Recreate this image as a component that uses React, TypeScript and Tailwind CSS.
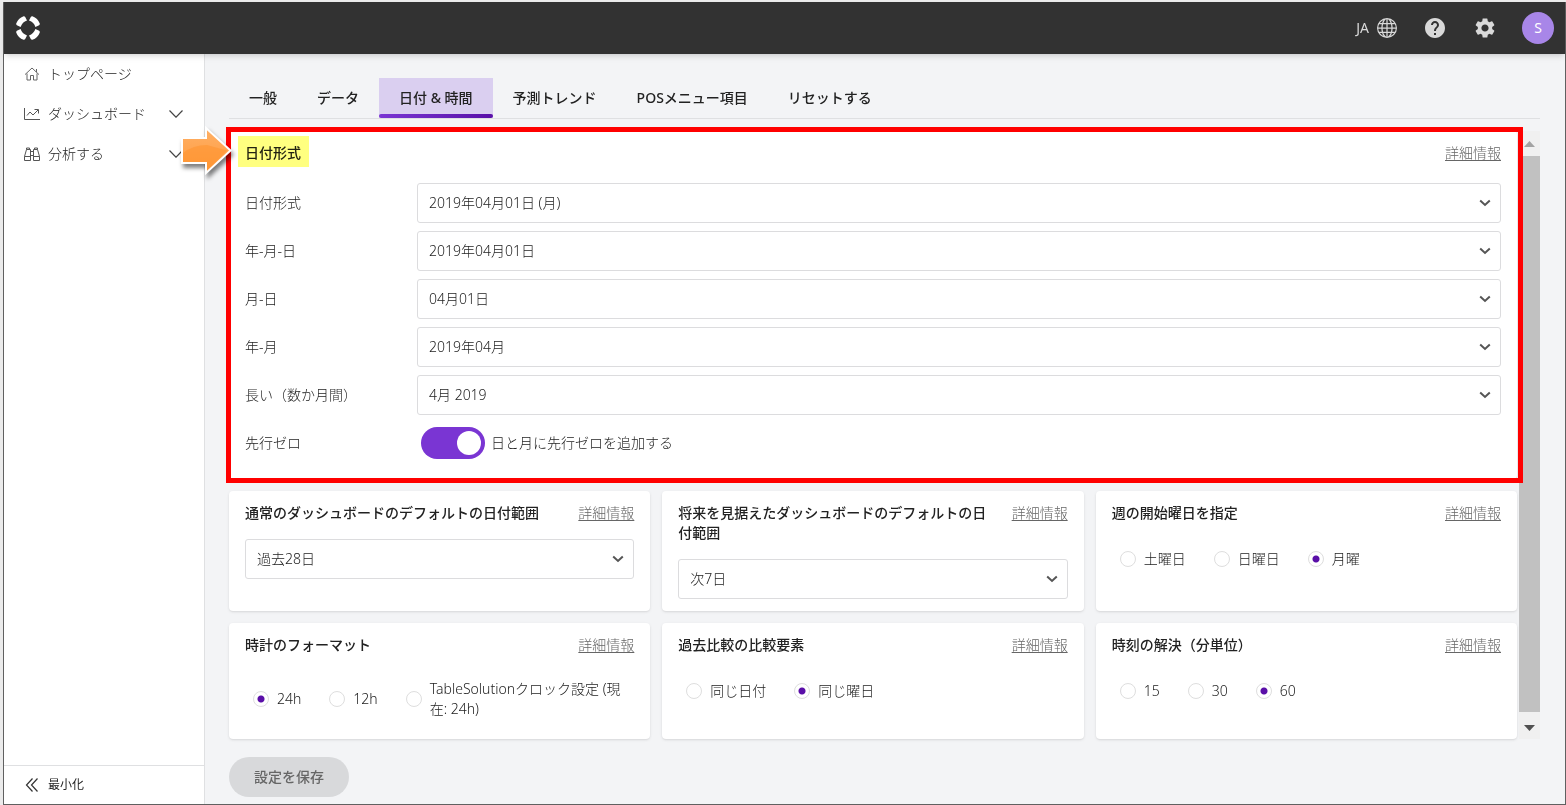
import { useState } from "react";
import { MdHelp, MdSettings } from "react-icons/md";
import { BsGlobe } from "react-icons/bs";

type SelectBoxProps = {
    id: string;
    label?: string;
    options: string[];
};

type CardProps = {
    title: string;
    children: React.ReactNode;
};

type RadioGroupProps = {
    name: string;
    options: string[];
    defaultOption: string;
};

const TABS = ["一般", "データ", "日付 & 時間", "予測トレンド", "POSメニュー項目", "リセットする"];

const FORMAT_ROWS = [
    { id: "date-format", label: "日付形式", options: ["2019年04月01日 (月)"] },
    { id: "year-month-day", label: "年-月-日", options: ["2019年04月01日"] },
    { id: "month-day", label: "月-日", options: ["04月01日"] },
    { id: "year-month", label: "年-月", options: ["2019年04月"] },
    { id: "long-months", label: "長い（数か月間）", options: ["4月 2019"] },
];

const Logo = () => (
    <svg viewBox="0 0 24 24" className="w-6 h-6" aria-hidden="true">
        <g fill="#fff">
            {[0, 90, 180, 270].map((angle) => (
                <path
                    key={angle}
                    transform={`rotate(${angle} 12 12)`}
                    d="M7.600 0.200 Q8.600 0 9.200 0.900 L11 4.600 Q6.400 6 4.600 11 L0.900 9.200 Q0 8.600 0.200 7.600 Q2.200 2.200 7.600 0.200Z"
                />
            ))}
        </g>
    </svg>
);

const HomeIcon = () => (
    <svg viewBox="0 0 16 16" className="w-4 h-4" fill="none" stroke="#666" aria-hidden="true">
        <path d="M1 8.600 8 2l7 6.600M3 7.500v6.500h3.500V9.500h3V14H13V7.500M12.500 6V3" />
    </svg>
);

const ChartIcon = () => (
    <svg viewBox="0 0 16 16" className="w-4 h-4" fill="none" stroke="#555" aria-hidden="true">
        <path d="M.5 2v11.500H16M3 9.500l3-3.500 3 3 5-5M10.500 3.500h4v4" />
    </svg>
);

const BinocularsIcon = () => (
    <svg viewBox="0 0 16 16" className="w-4 h-4" fill="none" stroke="#555" aria-hidden="true">
        <path d="M2.500 3.500V2h3v1.500M10.500 3.500V2h3v1.500M2.500 3.500h4v11h-6V10.500ZM13.500 3.500h-4v11h6V10.500ZM.5 10.500h6M9.500 10.500h6M6.500 5.500h3M6.500 9.500h3" />
    </svg>
);

const ThinChevron = () => (
    <svg viewBox="0 0 14 8" className="w-3.5 h-2" fill="none" stroke="#444" strokeWidth="1.200" aria-hidden="true">
        <path d="M.5.5 7 7.200 13.500.5" />
    </svg>
);

const SelectBox = ({ id, label, options }: SelectBoxProps) => (
    <div className="relative flex-1 min-w-0">
        <select
            id={id}
            aria-label={label}
            className="w-full h-10 appearance-none rounded-[3px] border border-[#dcdcde] bg-white pl-[11px] pr-8 text-sm font-light text-[#222]"
        >
            {options.map((option) => (
                <option key={option}>{option}</option>
            ))}
        </select>
        <svg viewBox="0 0 12 8" className="pointer-events-none absolute right-2.5 top-4 w-3 h-2" fill="none" stroke="#555" strokeWidth="2" aria-hidden="true">
            <path d="M1.200 1.500 6 6l4.800-4.500" />
        </svg>
    </div>
);

const DetailsLink = () => (
    <a href="#details" className="shrink-0 text-sm leading-5 font-light text-[#666] underline underline-offset-2">
        詳細情報
    </a>
);

const Card = ({ title, children }: CardProps) => (
    <section className="rounded bg-white px-4 py-3 shadow-sm">
        <header className="mb-4 flex items-start justify-between gap-6">
            <h2 className="text-sm leading-5 font-medium text-[#222]">{title}</h2>
            <DetailsLink />
        </header>
        {children}
    </section>
);

const RadioGroup = ({ name, options, defaultOption }: RadioGroupProps) => {
    const [selected, setSelected] = useState<string>(defaultOption);

    return (
        <div className="flex min-h-10 items-center gap-7 px-2 py-2">
            {options.map((option) => (
                <label key={option} className="flex items-center gap-2 text-sm leading-5 font-light text-[#222]">
                    <input
                        type="radio"
                        name={name}
                        checked={selected === option}
                        onChange={() => setSelected(option)}
                        className="h-4 w-4 shrink-0 appearance-none rounded-full border border-[#dedede] bg-white checked:bg-[radial-gradient(circle,#5a0fa8_3px,#fff_4px)]"
                    />
                    <span className={option.length < 8 ? "whitespace-nowrap" : ""}>{option}</span>
                </label>
            ))}
        </div>
    );
};

const Header = () => (
    <header className="relative z-10 flex h-[52px] items-center justify-between bg-[#323232] pl-3 pr-[11px] shadow-md">
        <Logo />
        <div className="flex items-center text-[#d9d9d9]">
            <button className="flex items-center gap-2 text-sm">
                JA
                <BsGlobe size={20} />
            </button>
            <button aria-label="ヘルプ" className="ml-[26px]">
                <MdHelp size={24} />
            </button>
            <button aria-label="設定" className="ml-[26px]">
                <MdSettings size={24} />
            </button>
            <button className="ml-[25px] h-8 w-8 rounded-full bg-[#a886e8] text-sm text-white">S</button>
        </div>
    </header>
);

const Sidebar = () => (
    <aside className="flex w-[201px] shrink-0 flex-col border-r border-[#dfe0e2] bg-white text-sm text-[#222]">
        <nav className="flex-1 font-light">
            <a href="#top" className="flex h-10 items-center gap-2 px-5">
                <HomeIcon />
                トップページ
            </a>
            <a href="#dashboard" className="flex h-10 items-center gap-2 pl-5 pr-[21px]">
                <ChartIcon />
                <span className="flex-1">ダッシュボード</span>
                <ThinChevron />
            </a>
            <a href="#analyze" className="flex h-10 items-center gap-2 pl-5 pr-[21px]">
                <BinocularsIcon />
                <span className="flex-1">分析する</span>
                <ThinChevron />
            </a>
        </nav>
        <button className="flex h-[39px] items-center gap-2 border-t border-[#dfe0e2] pl-5 text-xs">
            <svg viewBox="0 0 16 16" className="w-4 h-4" fill="none" stroke="#333" strokeWidth="1.200" aria-hidden="true">
                <path d="M8.500 1.500 2.500 8l6 6.500M13.500 1.500 7.500 8l6 6.500" />
            </svg>
            最小化
        </button>
    </aside>
);

const PointerArrow = () => (
    <svg viewBox="0 0 60 60" className="absolute -left-[50px] -top-2 z-20 w-[60px] h-[60px] drop-shadow-[2px_4px_2px_rgba(0,0,0,0.5)]" aria-hidden="true">
        <defs>
            <linearGradient id="arrowFill" x1="0" y1="0" x2="0" y2="1">
                <stop offset="0" stopColor="#ffb066" />
                <stop offset="1" stopColor="#ff9a3c" />
            </linearGradient>
        </defs>
        <path d="M3 15h24V5l24.500 22.500L27 50V40H3Z" fill="url(#arrowFill)" stroke="#fff" strokeWidth="2" />
        <path d="M4 39V30Q14 22 28 22L48 27.500 28 47.500V39Z" fill="#ff9430" opacity=".6" />
    </svg>
);

const DateFormatCard = () => {
    const [leadingZero, setLeadingZero] = useState<boolean>(true);

    return (
        <section className="relative rounded bg-white px-4 pt-3 pb-4 shadow-sm">
            <div className="pointer-events-none absolute -left-[3px] -right-[6px] -top-1 -bottom-1 z-10 border-[5px] border-[#ff0000]" />
            <PointerArrow />
            <header className="mb-5 flex items-start justify-between">
                <h2 className="relative text-sm leading-5 font-medium text-[#222]">
                    日付形式
                    <span className="absolute -left-[7px] -right-2 -top-[7px] -bottom-1 bg-[#ffff80] mix-blend-multiply" />
                </h2>
                <DetailsLink />
            </header>
            <div className="flex flex-col gap-2">
                {FORMAT_ROWS.map(({ id, label, options }) => (
                    <div key={id} className="flex items-center">
                        <label htmlFor={id} className="w-[172px] text-sm font-light text-[#222]">{label}</label>
                        <SelectBox id={id} options={options} />
                    </div>
                ))}
                <div className="flex h-10 items-center text-sm font-light text-[#222]">
                    <span className="w-[172px]">先行ゼロ</span>
                    <label className="flex items-center gap-1.5 pl-1">
                        <input
                            type="checkbox"
                            role="switch"
                            checked={leadingZero}
                            onChange={() => setLeadingZero(!leadingZero)}
                            className="h-8 w-16 appearance-none rounded-full bg-[#bbb] p-1 before:block before:h-6 before:w-6 before:rounded-full before:bg-white checked:bg-[#7a35d3] checked:before:ml-8"
                        />
                        日と月に先行ゼロを追加する
                    </label>
                </div>
            </div>
        </section>
    );
};

const ScrollRail = () => (
    <div className="ml-0.5 flex w-[21px] shrink-0 flex-col items-center bg-[#f0f0f0]" aria-hidden="true">
        <svg viewBox="0 0 21 25" className="h-[25px] w-[21px]">
            <path d="M5 16h11l-5.500-6Z" fill="#a3a3a3" />
        </svg>
        <div className="w-full flex-1 bg-[#c1c1c1]" />
        <svg viewBox="0 0 21 27" className="h-[27px] w-[21px]">
            <path d="M5 13h11l-5.500 6Z" fill="#505050" />
        </svg>
    </div>
);

const App = () => {
    const [activeTab, setActiveTab] = useState<string>("日付 & 時間");

    return (
        <div className="flex min-h-screen bg-[#ebebeb] pt-0.5 font-['Noto_Sans','Noto_Sans_CJK_JP',sans-serif]">
            <div className="ml-[3px] flex flex-1 flex-col border-r border-b border-l border-[#606060] bg-[#f3f4f6]">
                <Header />
                <div className="flex flex-1">
                    <Sidebar />
                    <main className="flex-1 min-w-0 pl-6 pr-[25px] pt-6">
                        <div className="flex border-b border-[#dfe0e2]">
                            {TABS.map((tab) => (
                                <button
                                    key={tab}
                                    onClick={() => setActiveTab(tab)}
                                    className={
                                        tab === activeTab
                                            ? "relative h-10 bg-[#dacff0] px-5 text-sm font-medium text-[#222] after:absolute after:inset-x-0 after:bottom-0 after:h-1 after:rounded-sm after:bg-linear-to-r after:from-[#7a35d3] after:to-[#5a0fa8]"
                                            : "h-10 px-5 text-sm font-medium text-[#222]"
                                    }
                                >
                                    {tab}
                                </button>
                            ))}
                        </div>
                        <div className="mt-3 flex">
                            <div className="flex flex-1 min-w-0 flex-col gap-3">
                                <DateFormatCard />
                                <div className="grid grid-cols-3 gap-3">
                                    <Card title="通常のダッシュボードのデフォルトの日付範囲">
                                        <div className="flex">
                                            <SelectBox id="default-range" label="通常のダッシュボードのデフォルトの日付範囲" options={["過去28日"]} />
                                        </div>
                                    </Card>
                                    <Card title="将来を見据えたダッシュボードのデフォルトの日付範囲">
                                        <div className="flex">
                                            <SelectBox id="future-range" label="将来を見据えたダッシュボードのデフォルトの日付範囲" options={["次7日"]} />
                                        </div>
                                    </Card>
                                    <Card title="週の開始曜日を指定">
                                        <RadioGroup name="week-start" options={["土曜日", "日曜日", "月曜"]} defaultOption="月曜" />
                                    </Card>
                                    <Card title="時計のフォーマット">
                                        <RadioGroup name="clock" options={["24h", "12h", "TableSolutionクロック設定 (現在: 24h)"]} defaultOption="24h" />
                                    </Card>
                                    <Card title="過去比較の比較要素">
                                        <RadioGroup name="comparison" options={["同じ日付", "同じ曜日"]} defaultOption="同じ曜日" />
                                    </Card>
                                    <Card title="時刻の解決（分単位）">
                                        <RadioGroup name="resolution" options={["15", "30", "60"]} defaultOption="60" />
                                    </Card>
                                </div>
                            </div>
                            <ScrollRail />
                        </div>
                        <button className="mt-[18px] h-10 rounded-full border border-transparent bg-[#d8d9db] px-6 text-sm font-medium text-[#666]">
                            設定を保存
                        </button>
                    </main>
                </div>
            </div>
        </div>
    );
};

export default App;
